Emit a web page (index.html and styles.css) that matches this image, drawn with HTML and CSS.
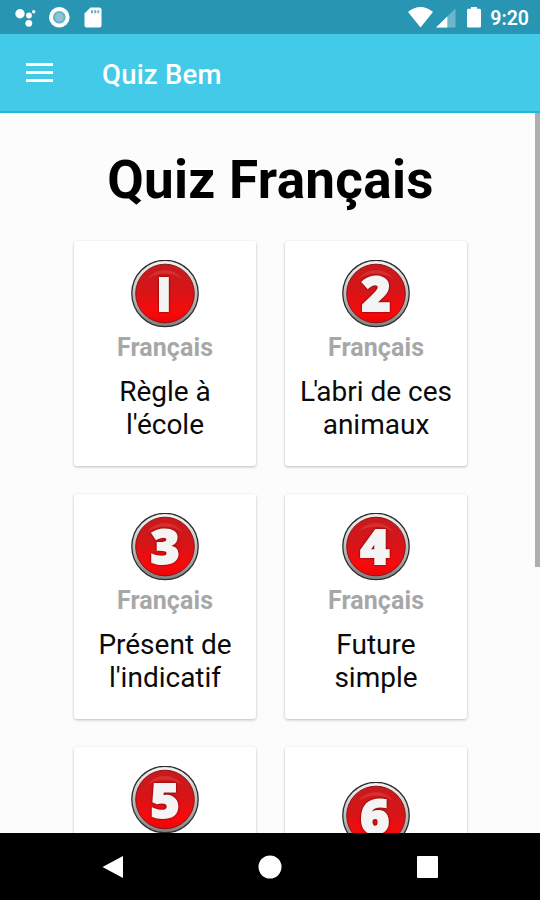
FILE: index.html
```html
<!DOCTYPE html>
<html lang="fr">
<head>
    <meta charset="UTF-8">
    <meta name="viewport" content="width=device-width, initial-scale=1.0">
    <title>Quiz Bem</title>
    <link rel="stylesheet" href="styles.css">
</head>
<body>
<!-- gradients shared by all the badges -->
<svg class="defs" width="0" height="0" aria-hidden="true">
    <defs>
        <linearGradient id="rim" x1="0" y1="0" x2="0" y2="1">
            <stop offset="0" stop-color="#f4f4f4"/>
            <stop offset=".5" stop-color="#bebebe"/>
            <stop offset="1" stop-color="#808080"/>
        </linearGradient>
        <linearGradient id="red" x1="0" y1="0" x2="0" y2="1">
            <stop offset="0" stop-color="#c81a1c"/>
            <stop offset=".45" stop-color="#d51518"/>
            <stop offset=".8" stop-color="#fa090b"/>
            <stop offset="1" stop-color="#ec0507"/>
        </linearGradient>
        <g id="button">
            <circle cx="34" cy="33.500" r="33.200" fill="url(#rim)" stroke="#2c2c2c" stroke-width="1.300"/>
            <circle cx="34" cy="33.500" r="29.300" fill="url(#red)" stroke="#8c1416" stroke-width="1"/>
            <path d="M16 19C26 7 42 7 52 19C41 12 27 12 16 19Z" fill="#ee5557" opacity=".35"/>
        </g>
    </defs>
</svg>

<div class="screen">
    <div class="status-bar">
        <svg class="status-left" width="90" height="24" viewBox="0 0 90 24" fill="#fff">
            <circle cx="6" cy="8.700" r="4.700"/>
            <circle cx="15" cy="10.500" r="2.900"/>
            <circle cx="19.700" cy="6.800" r="1.700"/>
            <circle cx="14.800" cy="18.300" r="3.400"/>
            <circle cx="45.300" cy="12.300" r="10.300"/>
            <circle cx="45.300" cy="12.300" r="6.300" fill="#67b2c7"/>
            <circle cx="45.300" cy="12.300" r="4.300" fill="#8bc5d4"/>
            <path d="M76.500 2.500H85.500Q87.500 2.500 87.500 4.500V20.500Q87.500 22.500 85.500 22.500H72.500Q70.500 22.500 70.500 20.500V8.500Z"/>
            <path d="M77 5.200h2v3h-2zM80.200 5.200h2v3h-2zM83.400 5.200h1.800v3h-1.800z" fill="#6badbd"/>
        </svg>
        <div class="status-right">
            <svg width="74" height="24" viewBox="0 0 74 24" fill="#fff">
                <path d="M1 7Q13.500-3 26 7L13.500 22.500Z"/>
                <path d="M48.500 3.500V22.500H29Z" opacity=".32"/>
                <path d="M40.300 11.500V22.500H29Z"/>
                <path d="M64 2h6v1.800h2.600q1.400 0 1.400 1.400V21q0 1.500-1.400 1.500H61.400Q60 22.500 60 21V5.200q0-1.400 1.400-1.400H64z"/>
            </svg>
            <span class="clock">9:20</span>
        </div>
    </div>

    <div class="app-bar">
        <div class="menu"><span></span><span></span><span></span></div>
        <div class="app-title">Quiz Bem</div>
    </div>

    <div class="content">
        <h1>Quiz Français</h1>
        <div class="grid">
            <div class="card">
                <svg class="badge" viewBox="0 0 68 68"><use href="#button"/><text class="one" x="33" y="51">I</text></svg>
                <div class="category">Français</div>
                <div class="name">Règle à<br>l'école</div>
            </div>
            <div class="card">
                <svg class="badge" viewBox="0 0 68 68"><use href="#button"/><text x="34" y="51">2</text></svg>
                <div class="category">Français</div>
                <div class="name"><span class="kern">L'</span>abri de ces<br>animaux</div>
            </div>
            <div class="card">
                <svg class="badge" viewBox="0 0 68 68"><use href="#button"/><text x="34" y="51">3</text></svg>
                <div class="category">Français</div>
                <div class="name">Présent de<br>l'indicatif</div>
            </div>
            <div class="card">
                <svg class="badge" viewBox="0 0 68 68"><use href="#button"/><text x="33" y="51">4</text></svg>
                <div class="category">Français</div>
                <div class="name">Future<br>simple</div>
            </div>
            <div class="card">
                <svg class="badge" viewBox="0 0 68 68"><use href="#button"/><text x="34" y="52">5</text></svg>
            </div>
            <div class="card short">
                <svg class="badge" viewBox="0 0 68 68"><use href="#button"/><text x="33" y="52">6</text></svg>
            </div>
        </div>
        <div class="scrollbar"></div>
    </div>

    <div class="nav-bar">
        <svg width="24" height="26" viewBox="0 0 24 26"><path d="M1.500 13L22 2V24Z"/></svg>
        <svg width="24" height="26" viewBox="0 0 24 26"><circle cx="12" cy="13" r="11.500"/></svg>
        <svg width="24" height="26" viewBox="0 0 24 26"><rect x="2" y="2" width="21" height="22" rx="1"/></svg>
    </div>
</div>
</body>
</html>
```
FILE: styles.css
```css
* { box-sizing: border-box; }
body { margin: 0; font-family: Roboto, "Liberation Sans", sans-serif; background: #fcfcfc; color: #0a0a0a; }
svg { display: block; }
.defs { position: absolute; }

.screen { width: 540px; height: 900px; display: flex; flex-direction: column; overflow: hidden; }

/* status bar */
.status-bar { height: 34px; flex: none; display: flex; justify-content: space-between; padding: 5px 11px 0 14px; background: #2895b2; color: #fff; }
.status-right { display: flex; gap: 9px; }
.clock { font-size: 19.500px; font-weight: 600; line-height: 27px; }

/* app bar */
.app-bar { height: 79px; flex: none; display: flex; align-items: center; gap: 49px; padding: 3px 26px 0; background: #42cae8; border-bottom: 2px solid #20b7d8; color: #fff; }
.menu { width: 27px; display: flex; flex-direction: column; gap: 5px; padding-bottom: 3px; }
.menu span { height: 3px; background: #fff; }
.app-title { font-size: 27.500px; font-weight: 550; line-height: 34px; padding-top: 2px; letter-spacing: .2px; }

/* quiz list */
.content { position: relative; flex: 1; min-height: 0; overflow: hidden; padding: 36px 73px 0 74px; }
h1 { margin: 0 -40px 30px; font-size: 53px; font-weight: 700; line-height: 62px; letter-spacing: .3px; text-align: center; color: #000; }
.grid { display: grid; grid-template-columns: 182px 182px; grid-auto-rows: 225px; gap: 28px 29px; }
.card { padding-top: 19px; display: flex; flex-direction: column; align-items: center; background: #fff; border-radius: 3px; box-shadow: 0 1px 3px rgba(0,0,0,.26); }
.card.short { padding-top: 35px; }
.badge { width: 68px; height: 68px; flex: none; }
.badge text { font-family: "Open Sans", Roboto, sans-serif; font-size: 47px; font-weight: 800; text-anchor: middle; fill: #f4f4f4; stroke: #f4f4f4; stroke-width: 1.800px; transform: scaleX(1.060); transform-origin: 34px 34px; filter: drop-shadow(0 0 1px #5c0000); }
.badge .one { font-family: Roboto, sans-serif; }
.category { margin-top: 5px; font-size: 25px; font-weight: 700; line-height: 30px; letter-spacing: .1px; color: #a7a7a7; }
.name { margin-top: 12px; font-size: 28px; line-height: 33px; text-align: center; white-space: nowrap; }
.kern { letter-spacing: -1.800px; }
.scrollbar { position: absolute; top: 0; right: 0; width: 5px; height: 454px; background: #aeaeae; }

/* navigation bar */
.nav-bar { height: 67px; flex: none; display: flex; justify-content: space-between; align-items: center; padding: 0 101px; background: #000; }
.nav-bar svg { fill: #fff; }
```
